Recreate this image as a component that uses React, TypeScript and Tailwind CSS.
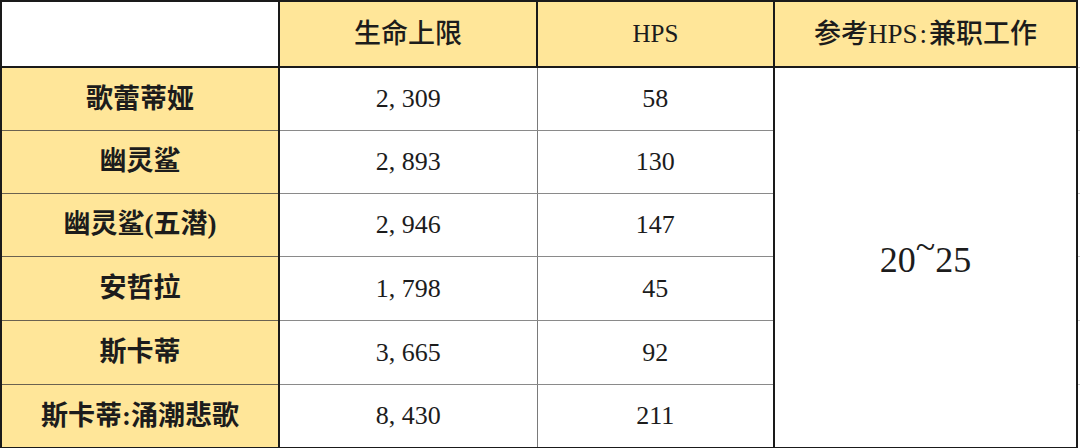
import React from 'react';

interface Row {
  name: string;
  hp: string;
  hps: string;
  h: string;
}

const rows: Row[] = [
  { name: '歌蕾蒂娅', hp: '2, 309', hps: '58', h: 'h-[63px]' },
  { name: '幽灵鲨', hp: '2, 893', hps: '130', h: 'h-[63px]' },
  { name: '幽灵鲨(五潜)', hp: '2, 946', hps: '147', h: 'h-[63px]' },
  { name: '安哲拉', hp: '1, 798', hps: '45', h: 'h-[64px]' },
  { name: '斯卡蒂', hp: '3, 665', hps: '92', h: 'h-[64px]' },
  { name: '斯卡蒂:涌潮悲歌', hp: '8, 430', hps: '211', h: 'h-[64px]' },
];

const serif = "font-['Liberation_Serif','Noto_Sans_CJK_SC',serif]";

export default function App() {
  return (
    <div className="w-[1080px] h-[448px] bg-white overflow-hidden">
      <table className={`table-fixed border-collapse w-[1080px] text-[#1c1c1c] ${serif}`}>
        <colgroup>
          <col className="w-[278px]" />
          <col className="w-[258px]" />
          <col className="w-[237px]" />
          <col className="w-[303px]" />
          <col className="w-[4px]" />
        </colgroup>
        <thead>
          <tr className="h-[66px]">
            <th className="bg-white border-2 border-[#1a1a1a]" />
            <th className="bg-[#ffe699] border-2 border-[#1a1a1a] text-[27px] font-medium">生命上限</th>
            <th className="bg-[#ffe699] border-2 border-[#1a1a1a] text-[25px] font-normal">HPS</th>
            <th className="bg-[#ffe699] border-2 border-[#1a1a1a] text-[27px] font-medium">
              参考HPS<span className="px-[2px]">:</span>兼职工作
            </th>
            <th className="border-b border-[#c8c8c8]" />
          </tr>
        </thead>
        <tbody>
          {rows.map((r, i) => (
            <tr key={r.name} className={r.h}>
              <td
                className={`bg-[#ffe699] border-l-2 border-r-2 border-[#1a1a1a] text-center text-[27px] font-bold ${
                  i === rows.length - 1 ? 'border-b-2' : 'border-b'
                } ${i < rows.length - 1 ? 'border-b-[#6b6250]' : ''}`}
              >
                {r.name}
              </td>
              <td
                className={`text-center text-[26px] border-r border-r-[#7a7a7a] ${
                  i === rows.length - 1 ? 'border-b-2 border-b-[#1a1a1a]' : 'border-b border-b-[#8a8a8a]'
                }`}
              >
                {r.hp}
              </td>
              <td
                className={`text-center text-[26px] ${
                  i === rows.length - 1 ? 'border-b-2 border-b-[#1a1a1a]' : 'border-b border-b-[#8a8a8a]'
                }`}
              >
                {r.hps}
              </td>
              {i === 0 && (
                <td
                  rowSpan={rows.length}
                  className="text-center align-middle text-[36px] border-l-2 border-r-2 border-b-2 border-[#1a1a1a]"
                >
                  <span className="relative top-[2px]">
                    20<span className="relative -top-[13px]">~</span>25
                  </span>
                </td>
              )}
              <td className="border-b border-[#c8c8c8]" />
            </tr>
          ))}
        </tbody>
      </table>
    </div>
  );
}
